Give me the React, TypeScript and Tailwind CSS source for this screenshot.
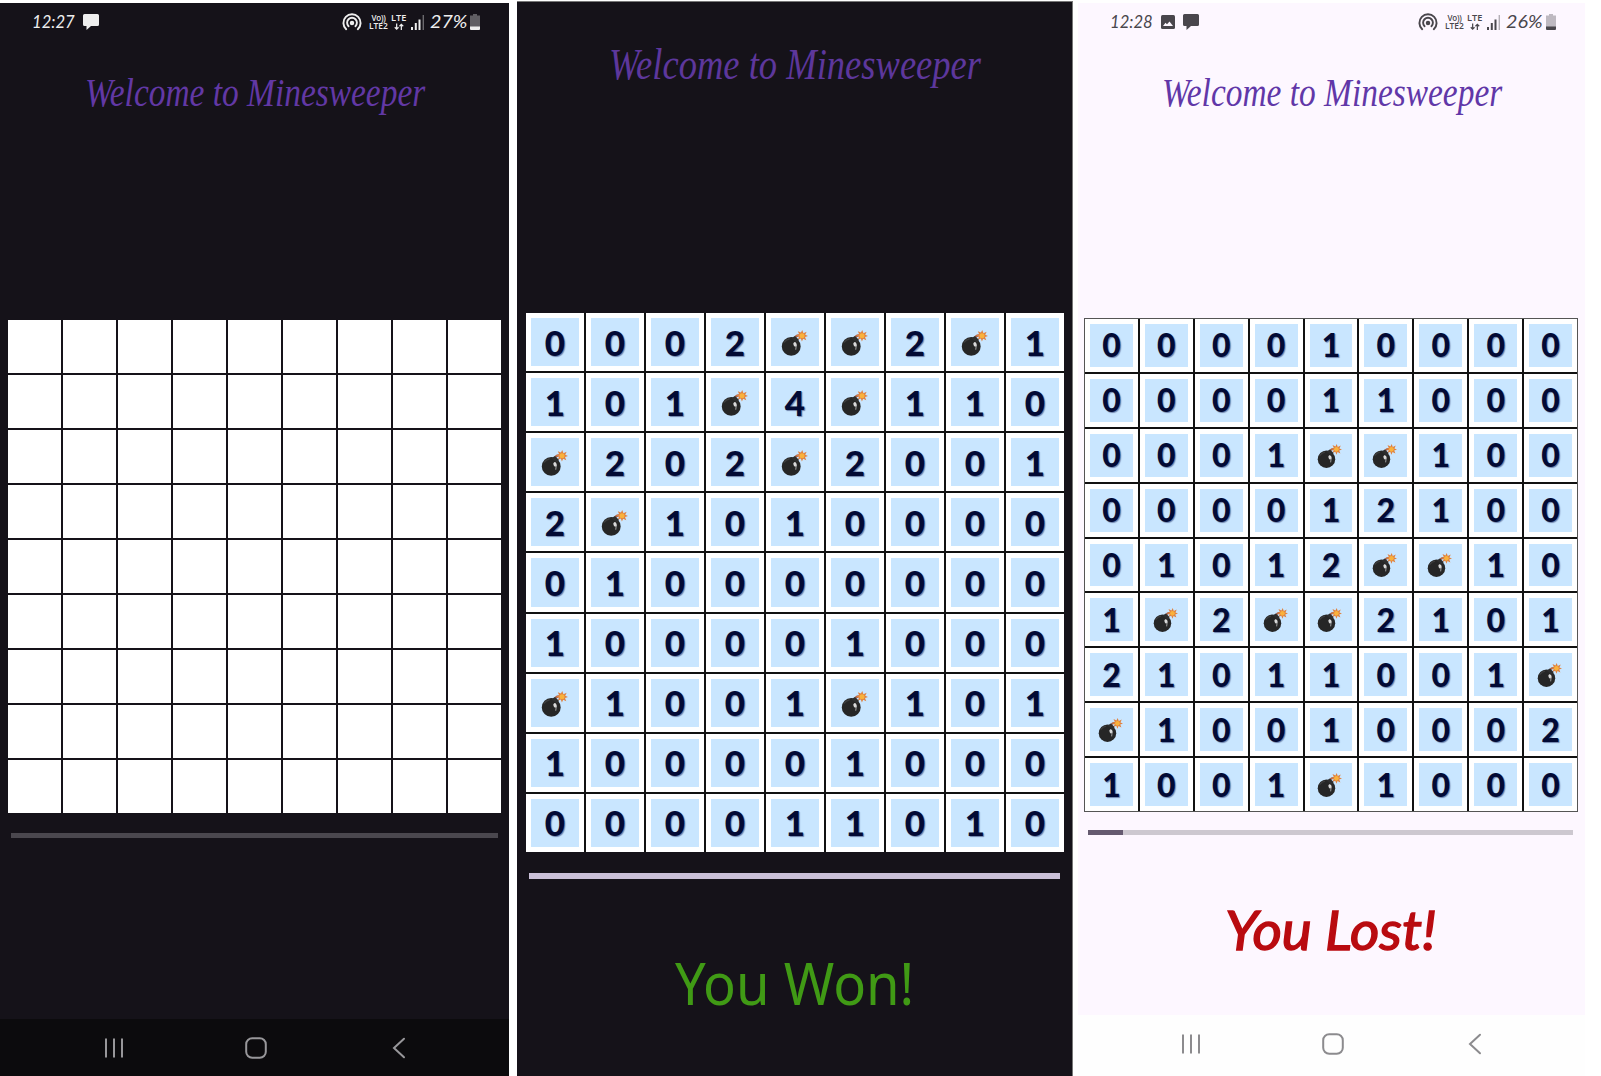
import { useLayoutEffect, useRef } from "react";
import type { ReactNode } from "react";

const WON = [
  "0002**2*1",
  "101*4*110",
  "*202*2001",
  "2*1010000",
  "010000000",
  "100001000",
  "*1001*101",
  "100001000",
  "000011010",
];

const LOST = [
  "000010000",
  "000011000",
  "0001**100",
  "000012100",
  "01012**10",
  "1*2**2101",
  "21011001*",
  "*10010002",
  "1001*1000",
];

/* A single line of text stretched horizontally to an exact width. */
function Fit({ width, className, children }: { width: number; className: string; children: string }) {
  const ref = useRef<HTMLSpanElement>(null);
  useLayoutEffect(() => {
    const fit = () => {
      const el = ref.current;
      if (el && el.offsetWidth) el.style.transform = `scaleX(${width / el.offsetWidth})`;
    };
    fit();
    document.fonts?.ready.then(fit);
  }, [width]);
  return (
    <span className="block" style={{ width }}>
      <span ref={ref} className={`inline-block origin-left whitespace-nowrap ${className}`}>
        {children}
      </span>
    </span>
  );
}

function Bomb({ className }: { className: string }) {
  return (
    <svg viewBox="0 0 28 28" className={className}>
      <path d="M14 9 Q16 4.500 20 6" fill="none" stroke="#a9654f" strokeWidth="2.400" />
      <path
        d="M22 0l1.300 3.300 3.300-1.600-1.500 3.200 2.900 1.300-3.100 1.100 1.300 3.300-3.200-1.600-1.300 3-1.200-3.200-3.300 1.300 1.500-3.200-3-1.300 3.100-1.200-1.400-3.200 3.300 1.500z"
        fill="#e0823f"
      />
      <circle cx="21.800" cy="6" r="2.600" fill="#f9b23c" />
      <circle cx="10.600" cy="17" r="9.800" fill="#262626" />
      <path d="M10.500 8.500l4-2.300 4 4-1.600 3.200z" fill="#2e2e2e" />
      <path d="M3 13a9 9 0 0 1 6-4" fill="none" stroke="#3d3d3d" strokeWidth="1.500" />
      <ellipse cx="14.600" cy="15" rx="1.700" ry="2.500" fill="#d9d9d9" transform="rotate(-20 14.600 15)" />
      <path d="M15.800 16.500l-.6 4" stroke="#8a8a8a" strokeWidth="1.300" />
    </svg>
  );
}

function BigBoard() {
  return (
    <div className="grid h-[539px] w-[538px] grid-cols-9 grid-rows-9 gap-[2px] bg-[#111]">
      {WON.join("").split("").map((c, i) => (
        <div key={i} className="flex bg-white p-[5px]">
          <div className="flex flex-1 items-center justify-center bg-[#c9e6ff]">
            {c === "*" ? (
              <Bomb className="mt-[3px] mr-[2px] h-[27px] w-[27px]" />
            ) : (
              <span className="font-[Lato] text-[35px] leading-none font-black text-[#020a35] [text-shadow:1px_1px_1px_#6f83ac]">{c}</span>
            )}
          </div>
        </div>
      ))}
    </div>
  );
}

function SmallBoard() {
  return (
    <div className="grid h-[494px] w-[494px] grid-cols-9 grid-rows-9 gap-[2px] border border-[#555] bg-[#111]">
      {LOST.join("").split("").map((c, i) => (
        <div key={i} className="flex bg-white p-[5px]">
          <div className="flex flex-1 items-center justify-center bg-[#c9e6ff]">
            {c === "*" ? (
              <Bomb className="mt-[2px] mr-[2px] h-[25px] w-[25px]" />
            ) : (
              <span className="font-[Lato] text-[32px] leading-none font-black text-[#020a35] [text-shadow:1px_1px_1px_#6f83ac]">{c}</span>
            )}
          </div>
        </div>
      ))}
    </div>
  );
}

function Bubble() {
  return (
    <svg viewBox="0 0 16 16" className="h-4 w-4" fill="currentColor">
      <path d="M1.500 0h13A1.500 1.500 0 0 1 16 1.500v9a1.500 1.500 0 0 1-1.500 1.500H8l-4.500 4v-4h-2A1.500 1.500 0 0 1 0 10.500v-9A1.500 1.500 0 0 1 1.500 0z" />
    </svg>
  );
}

function Picture() {
  return (
    <svg viewBox="0 0 14 14" className="mr-2 h-3.5 w-3.5">
      <rect width="14" height="14" rx="1.500" fill="currentColor" />
      <path d="M2 11l2.500-3.200 1.500 1.500 2.500-2.800L12 11z" fill="#fdf7ff" />
    </svg>
  );
}

function StatusBar({ time, battery, extra }: { time: string; battery: string; extra?: ReactNode }) {
  return (
    <div className="flex h-[38px] items-center pr-[29px] pl-[32px]">
      <Fit width={43} className="font-[Lato] text-[17px] leading-[20px] italic">{time}</Fit>
      <div className="ml-2 flex items-center">
        {extra}
        <Bubble />
      </div>
      <div className="ml-auto flex items-center">
        <svg viewBox="0 0 20 18" className="h-[18px] w-5" fill="none" stroke="currentColor" strokeWidth="1.900" strokeLinecap="round">
          <path d="M4.200 16.200a8.600 8.600 0 1 1 11.600 0" />
          <path d="M6.600 13.200a4.900 4.900 0 1 1 6.800 0" />
          <circle cx="10" cy="10" r="1.300" fill="currentColor" />
        </svg>
        <div className="ml-[7px] flex w-[19px] flex-col items-center font-['Open_Sans'] text-[8px] leading-[8.500px] font-semibold">
          <span className="tracking-[-0.200px]">Vo))</span>
          <Fit width={19} className="tracking-normal">LTE2</Fit>
        </div>
        <div className="ml-[3px] flex w-[15px] flex-col items-center font-['Open_Sans'] text-[8px] leading-[8.500px] font-semibold">
          <Fit width={15} className="tracking-normal">LTE</Fit>
          <svg viewBox="0 0 10 8" className="my-[0.500px] h-[7.500px] w-[10px]" fill="none" stroke="currentColor" strokeWidth="1.300">
            <path d="M2.500 0.500v6M0.500 4.500l2 2 2-2M7.500 7.500v-6M5.500 3.500l2-2 2 2" />
          </svg>
        </div>
        <svg viewBox="0 0 14 15" className="ml-[5px] h-[15px] w-3.5" fill="currentColor">
          <rect x="0" y="12" width="2" height="3" />
          <rect x="3.800" y="8" width="2" height="7" />
          <rect x="7.500" y="4.500" width="2" height="10.500" />
          <rect x="11.600" y="0" width="1.400" height="15" opacity=".4" />
        </svg>
        <div className="ml-[5px]">
          <Fit width={37} className="font-[Lato] text-[17px] leading-[20px] italic">{battery}</Fit>
        </div>
        <svg viewBox="0 0 10 16" className="ml-[3px] h-4 w-[10px]" fill="currentColor">
          <path d="M3 0h4v1.500h3V13H0V1.500h3z" opacity=".35" />
          <path d="M0 12.500h10V15a1 1 0 0 1-1 1H1a1 1 0 0 1-1-1z" />
        </svg>
      </div>
    </div>
  );
}

function NavIcon({ kind }: { kind: "recents" | "home" | "back" }) {
  return (
    <svg viewBox="0 0 24 24" className="h-6 w-6" fill="none" stroke="currentColor" strokeWidth="2" strokeLinecap="round">
      {kind === "recents" && <path d="M4 2.500v19M12 2.500v19M20 2.500v19" strokeLinecap="butt" />}
      {kind === "home" && <rect x="2.200" y="2.200" width="19.600" height="19.600" rx="6" />}
      {kind === "back" && <path d="M17 2.800L7 12l10 9.200" />}
    </svg>
  );
}

const TITLE = "Welcome to Minesweeper";

export default function App() {
  return (
    <div className="flex h-[1076px] w-[1601px] overflow-hidden bg-white">
      <section className="mt-[3px] flex w-[509px] flex-col bg-[#151219] text-[#eee]">
        <StatusBar time="12:27" battery="27%" />
        <h1 className="mt-[24px] ml-[85px] h-[56px] text-[#6238a5]">
          <Fit width={340} className="font-['Liberation_Serif'] text-[40px] leading-[56px] italic">{TITLE}</Fit>
        </h1>
        <div className="mt-[199px] ml-2 grid h-[493px] w-[493px] grid-cols-9 grid-rows-9 gap-[2px] bg-[#151219]">
          {Array.from({ length: 81 }, (_, i) => (
            <div key={i} className="bg-white" />
          ))}
        </div>
        <div className="mt-[20px] ml-[11px] h-[5px] w-[487px] bg-[#4a474e]" />
        <div className="mt-auto flex h-[57px] items-center bg-[#0c0b0d] pt-px pl-[102px] text-[#98979a]">
          <NavIcon kind="recents" />
          <div className="ml-[118px]">
            <NavIcon kind="home" />
          </div>
          <div className="ml-[119px]">
            <NavIcon kind="back" />
          </div>
        </div>
      </section>

      <section className="mt-[1px] ml-2 flex w-[556px] flex-col border-t border-r border-[#777] bg-[#151219]">
        <h1 className="mt-[35px] ml-[92px] h-[56px] text-[#5d379c]">
          <Fit width={372} className="font-['Liberation_Serif'] text-[44px] leading-[56px] italic">{TITLE}</Fit>
        </h1>
        <div className="mt-[220px] ml-[9px]">
          <BigBoard />
        </div>
        <div className="mt-[21px] ml-[12px] h-[6px] w-[531px] bg-[#cac0d8]" />
        <div className="mt-[64px] ml-[158px] text-[#409a15]">
          <Fit width={239} className="font-['Noto_Sans'] text-[58px] leading-[80px]">You Won!</Fit>
        </div>
      </section>

      <section className="mt-[3px] ml-[5px] flex w-[507px] flex-col bg-[#fdf7ff] text-[#49464c]">
        <StatusBar
          time="12:28"
          battery="26%"
          extra={<Picture />}
        />
        <h1 className="mt-[24px] ml-[84px] h-[56px] text-[#6137a8]">
          <Fit width={340} className="font-['Liberation_Serif'] text-[40px] leading-[56px] italic">{TITLE}</Fit>
        </h1>
        <div className="mt-[197px] ml-[6px]">
          <SmallBoard />
        </div>
        <div className="mt-[18px] ml-[10px] h-[5px] w-[485px] bg-[#cdc8d0]">
          <div className="h-full w-[35px] bg-[#655a70]" />
        </div>
        <div className="mt-[60px] ml-[147px] text-[#b90b10]">
          <Fit width={211} className="font-[Lato] text-[54px] leading-[70px] italic [-webkit-text-stroke:1.400px_#b90b10]">You Lost!</Fit>
        </div>
        <div className="mt-auto flex h-[61px] items-center bg-[#fefefe] pb-[3px] pl-[101px] text-[#8c8b8e]">
          <NavIcon kind="recents" />
          <div className="ml-[118px]">
            <NavIcon kind="home" />
          </div>
          <div className="ml-[118px]">
            <NavIcon kind="back" />
          </div>
        </div>
      </section>
    </div>
  );
}
